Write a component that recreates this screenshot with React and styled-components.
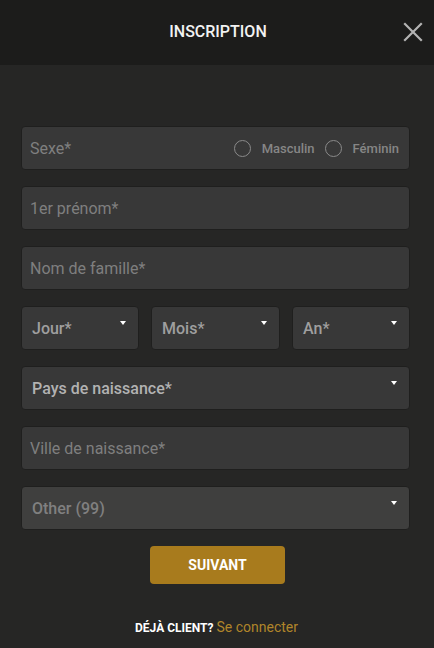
import React, { useState } from 'react'
import styled, { createGlobalStyle } from 'styled-components'

const GlobalStyle = createGlobalStyle`
  html, body {
    margin: 0;
    padding: 0;
    background: #262625;
    font-family: Roboto, "Liberation Sans", Arial, sans-serif;
  }
  * { box-sizing: border-box; }
`

const Page = styled.div`
  width: 434px;
  min-height: 648px;
  background: #262625;
  display: flex;
  flex-direction: column;
`

const Header = styled.header`
  height: 65px;
  background: #1c1c1b;
  display: flex;
  align-items: center;
  justify-content: center;
  position: relative;
  h1 {
    margin: 0 0 3px 2px;
    font-size: 16px;
    font-weight: 500;
    color: #f2f2f2;
  }
`

const Close = styled.button`
  position: absolute;
  right: 10px;
  top: 21px;
  width: 22px;
  height: 22px;
  padding: 0;
  border: none;
  background: none;
  cursor: pointer;
`

const Form = styled.form`
  padding: 61px 24px 0 21px;
  display: flex;
  flex-direction: column;
  gap: 16px;
`

const Field = styled.div`
  height: 44px;
  border-radius: 4px;
  border: 1px solid #1f1f1e;
  background: ${p => (p.$light ? '#3f3f3e' : '#383838')};
  display: flex;
  align-items: center;
  padding: 0 10px 0 ${p => (p.$select ? 10 : 8)}px;
  position: relative;
  font-size: 16px;
  color: ${p => p.$color || '#7f7f7f'};
  font-weight: ${p => (p.$select ? 500 : 400)};
`

const Caret = styled.span`
  position: absolute;
  right: 12px;
  top: 14px;
  width: 0;
  height: 0;
  border-left: 3px solid transparent;
  border-right: 3px solid transparent;
  border-top: 4px solid #ffffff;
`

const DateRow = styled.div`
  display: grid;
  grid-template-columns: 118px 1fr 118px;
  gap: 12px;
`

const Radios = styled.div`
  margin-left: auto;
  display: flex;
  align-items: center;
  gap: 10px;
`

const Radio = styled.label`
  display: flex;
  align-items: center;
  gap: 11px;
  font-size: 13px;
  font-weight: 500;
  color: #868686;
  cursor: pointer;
  &::before {
    content: '';
    width: 15px;
    height: 15px;
    border-radius: 50%;
    border: 1.5px solid #8a8a8a;
    background: ${p => (p.$on ? '#8a8a8a' : 'transparent')};
  }
`

const Submit = styled.button`
  align-self: center;
  margin-left: 4px;
  width: 135px;
  height: 38px;
  border: none;
  border-radius: 4px;
  background: #a87b1d;
  color: #ffffff;
  font-family: inherit;
  font-size: 14px;
  font-weight: 700;
  cursor: pointer;
`

const Footer = styled.p`
  margin: 35px 0 0;
  text-align: center;
  font-size: 12px;
  color: #ffffff;
  padding-right: 1px;
  b { font-weight: 700; }
  a {
    color: #b0852a;
    font-size: 14px;
    text-decoration: none;
    margin-left: 3px;
  }
`

function Select({ label, color = '#9f9f9f', light }) {
  return (
    <Field $select $color={color} $light={light}>
      {label}
      <Caret />
    </Field>
  )
}

export default function App() {
  const [sex, setSex] = useState(null)

  return (
    <Page>
      <GlobalStyle />
      <Header>
        <h1>INSCRIPTION</h1>
        <Close aria-label="Fermer">
          <svg width="22" height="22" viewBox="0 0 22 22">
            <path d="M3 3 L19 19 M19 3 L3 19" stroke="#b3b3b3" strokeWidth="2.2" strokeLinecap="square" />
          </svg>
        </Close>
      </Header>
      <Form onSubmit={e => e.preventDefault()}>
        <Field>
          Sexe*
          <Radios>
            <Radio $on={sex === 'm'} onClick={() => setSex('m')}>Masculin</Radio>
            <Radio $on={sex === 'f'} onClick={() => setSex('f')}>Féminin</Radio>
          </Radios>
        </Field>
        <Field>1er prénom*</Field>
        <Field>Nom de famille*</Field>
        <DateRow>
          <Select label="Jour*" />
          <Select label="Mois*" />
          <Select label="An*" />
        </DateRow>
        <Select label="Pays de naissance*" color="#b2b2b2" />
        <Field>Ville de naissance*</Field>
        <Select label="Other (99)" color="#808080" light />
        <Submit type="submit">SUIVANT</Submit>
      </Form>
      <Footer>
        <b>DÉJÀ CLIENT?</b>
        <a href="#">Se connecter</a>
      </Footer>
    </Page>
  )
}
